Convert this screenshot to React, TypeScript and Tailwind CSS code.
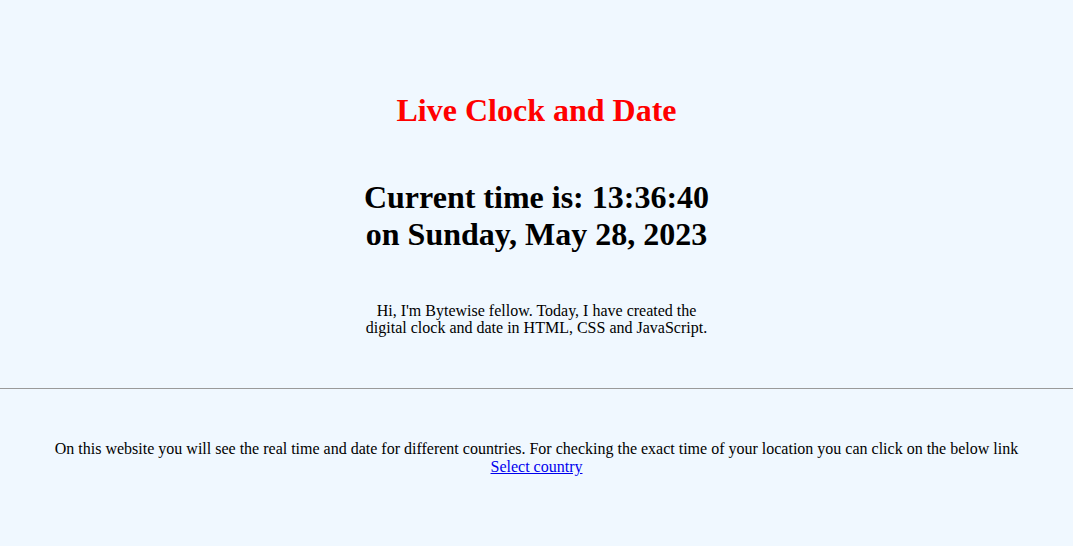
export default function App() {
  return (
    <div className="min-h-[546px] w-full bg-[#f0f8ff] text-black font-['Liberation_Serif',serif]">
      <div className="flex flex-col items-center pt-[92px]">
        <h1 className="text-[32px] leading-[37px] font-bold text-[#ff0000]">Live Clock and Date</h1>
        <div className="mt-[50px] text-center text-[32px] leading-[37px] font-bold">
          <div>Current time is: 13:36:40</div>
          <div>on Sunday, May 28, 2023</div>
        </div>
        <p className="mt-[49px] w-[346px] text-center text-[16px] leading-[17px]">
          Hi, I'm Bytewise fellow. Today, I have created the digital clock and date in HTML, CSS and JavaScript.
        </p>
      </div>
      <div className="mt-[52px] border-t border-[#9a9a9a]" />
      <div className="mt-[51px] text-center text-[16px] leading-[18px]">
        <div>On this website you will see the real time and date for different countries. For checking the exact time of your location you can click on the below link</div>
        <a href="#" className="text-[#0000ee] underline">Select country</a>
      </div>
    </div>
  );
}
